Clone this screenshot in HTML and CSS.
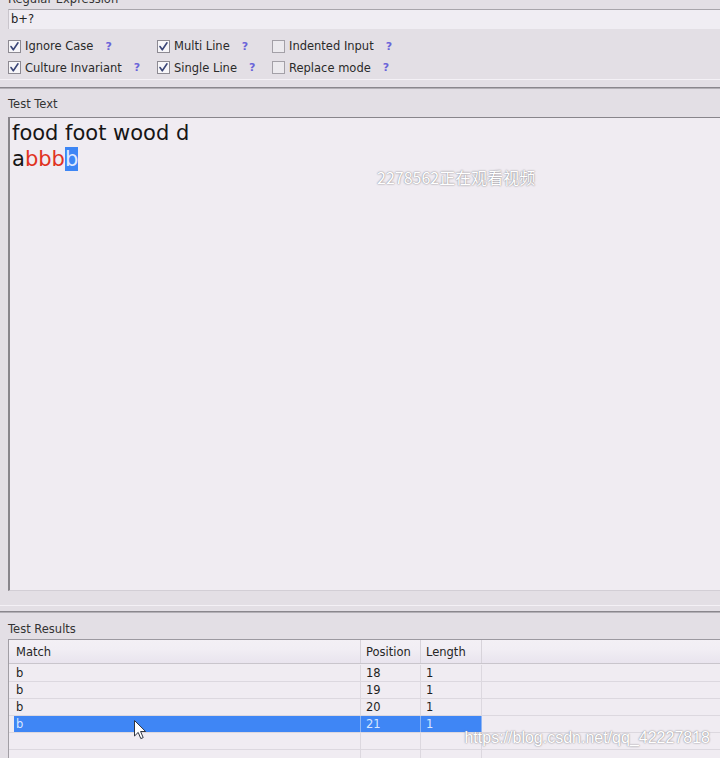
FILE: index.html
```html
<!DOCTYPE html>
<html>
<head>
<meta charset="utf-8">
<link rel="stylesheet" href="styles.css">
</head>
<body>
<div class="app">
  <section class="regex">
    <div class="label label-cut">Regular Expression</div>
    <div class="regex-input">b+?</div>
    <div class="options">
      <div class="opt"><svg class="cb" viewBox="0 0 13 13"><rect class="cb-box" x="0.5" y="0.5" width="12" height="12"/><path class="cb-check" d="M3 6.5 L5.3 9.8 L10 2.8"/></svg><span>Ignore Case</span><span class="help">?</span></div>
      <div class="opt"><svg class="cb" viewBox="0 0 13 13"><rect class="cb-box" x="0.5" y="0.5" width="12" height="12"/><path class="cb-check" d="M3 6.5 L5.3 9.8 L10 2.8"/></svg><span>Multi Line</span><span class="help">?</span></div>
      <div class="opt"><svg class="cb" viewBox="0 0 13 13"><rect class="cb-box off" x="0.5" y="0.5" width="12" height="12"/></svg><span>Indented Input</span><span class="help">?</span></div>
      <div class="opt"><svg class="cb" viewBox="0 0 13 13"><rect class="cb-box" x="0.5" y="0.5" width="12" height="12"/><path class="cb-check" d="M3 6.5 L5.3 9.8 L10 2.8"/></svg><span>Culture Invariant</span><span class="help">?</span></div>
      <div class="opt"><svg class="cb" viewBox="0 0 13 13"><rect class="cb-box" x="0.5" y="0.5" width="12" height="12"/><path class="cb-check" d="M3 6.5 L5.3 9.8 L10 2.8"/></svg><span>Single Line</span><span class="help">?</span></div>
      <div class="opt"><svg class="cb" viewBox="0 0 13 13"><rect class="cb-box off" x="0.5" y="0.5" width="12" height="12"/></svg><span>Replace mode</span><span class="help">?</span></div>
    </div>
  </section>
  <div class="splitter splitter-top"></div>
  <section class="test-text">
    <div class="label">Test Text</div>
    <div class="editor">
      <div class="line">food foot wood d</div>
      <div class="line">a<span class="hit">bbb</span><span class="sel">b</span></div>
      <div class="viewer-mark">2278562正在观看视频</div>
    </div>
  </section>
  <div class="splitter splitter-bottom"></div>
  <section class="results">
    <div class="label">Test Results</div>
    <div class="table">
      <div class="thead">
        <div class="th th-match">Match</div>
        <div class="th">Position</div>
        <div class="th">Length</div>
        <div class="th th-rest"></div>
      </div>
      <div class="tbody">
        <div class="tr"><div class="pad"></div><div class="td td-match">b</div><div class="td">18</div><div class="td">1</div><div class="td td-rest"></div></div>
        <div class="tr"><div class="pad"></div><div class="td td-match">b</div><div class="td">19</div><div class="td">1</div><div class="td td-rest"></div></div>
        <div class="tr"><div class="pad"></div><div class="td td-match">b</div><div class="td">20</div><div class="td">1</div><div class="td td-rest"></div></div>
        <div class="tr tr-selected"><div class="pad"></div><div class="td td-match">b</div><div class="td">21</div><div class="td">1</div><div class="td td-rest"></div></div>
        <div class="tr"><div class="pad"></div><div class="td td-match"></div><div class="td"></div><div class="td"></div><div class="td td-rest"></div></div>
        <div class="tr"><div class="pad"></div><div class="td td-match"></div><div class="td"></div><div class="td"></div><div class="td td-rest"></div></div>
      </div>
    </div>
  </section>
</div>
<svg class="cursor" viewBox="0 0 13 20"><path d="M0.5 0.5 L0.5 16 L4.2 12.4 L6.8 18.6 L9.2 17.6 L6.6 11.5 L11.6 11.5 Z"/></svg>
<div class="csdn-mark">https://blog.csdn.net/qq_42227818</div>
</body>
</html>
```
FILE: styles.css
```css
html, body {
  margin: 0;
  padding: 0;
}
body {
  width: 720px;
  height: 758px;
  overflow: hidden;
  position: relative;
  background: #e3dfe5;
  font-family: "DejaVu Sans", Verdana, sans-serif;
  font-size: 11.5px;
  color: #2a2a2a;
}
.app {
  display: flex;
  flex-direction: column;
}
.label {
  line-height: 14px;
  height: 14px;
  box-sizing: border-box;
  padding: 1px 0 0 8px;
  color: #333;
  white-space: nowrap;
}
.label-cut {
  margin-top: -9px;
}
.regex-input {
  margin: 4px 0 0 8px;
  height: 20px;
  box-sizing: border-box;
  border-top: 1px solid #a8a5ab;
  border-left: 1px solid #c9c5cc;
  background: #f0edf3;
  line-height: 19px;
  padding-left: 2px;
  color: #222;
}
.options {
  display: grid;
  grid-template-columns: 149px 115px 1fr;
  grid-template-rows: 22px 21px;
  padding: 6px 0 0 8px;
}
.opt {
  display: flex;
  align-items: center;
  gap: 4px;
  white-space: nowrap;
}
.cb {
  width: 13px;
  height: 13px;
  flex: none;
}
.cb-box {
  fill: #f7f6f9;
  stroke: #8d8a92;
  stroke-width: 1;
}
.cb-box.off {
  fill: #eceaee;
  stroke: #a3a0a7;
}
.cb-check {
  fill: none;
  stroke: #3b4678;
  stroke-width: 1.6;
  stroke-linecap: round;
  stroke-linejoin: round;
}
.help {
  margin-left: 8px;
  color: #6a64d9;
  font-weight: bold;
  font-size: 11px;
}
.splitter {
  border-top: 1px solid #f4f1f6;
  border-bottom: 1px solid #8a878d;
  box-shadow: 0 1px 0 #b3b0b6;
}
.splitter-top {
  margin-top: 1px;
  height: 7px;
}
.splitter-bottom {
  margin-top: 14px;
  height: 5px;
}
.test-text {
  padding-top: 8px;
}
.test-text .label {
  margin-bottom: 7px;
}
.editor {
  position: relative;
  margin-left: 8px;
  height: 474px;
  box-sizing: border-box;
  border-top: 1px solid #88858b;
  border-left: 2px solid #88858b;
  border-bottom: 1px solid #d2ced5;
  background: #f0ecf2;
  padding: 2px 0 0 2px;
  font-size: 21px;
  line-height: 26px;
  color: #161616;
}
.line {
  white-space: pre;
}
.hit {
  color: #e0321f;
}
.sel {
  background: #3d86f5;
  color: #dfe9ff;
}
.viewer-mark {
  position: absolute;
  left: 367px;
  top: 51px;
  font-family: "Noto Sans CJK SC", "Noto Sans", sans-serif;
  font-size: 16px;
  line-height: 16px;
  color: #ffffff;
  text-shadow: 0 0 2px #8d8a90, 0 0 1px #a09da3;
  white-space: nowrap;
}
.results {
  padding-top: 9px;
}
.results .label {
  margin-bottom: 4px;
}
.table {
  margin-left: 8px;
  border-left: 1px solid #a19ea4;
  border-top: 1px solid #9c99a0;
  background: #f0ecf2;
  height: 200px;
}
.thead {
  display: grid;
  grid-template-columns: 352px 60px 61px 1fr;
  height: 24px;
  box-sizing: border-box;
  border-bottom: 1px solid #c9c5cc;
  background: linear-gradient(#f3f0f5, #f1eef4 40%, #e9e4ee);
}
.th {
  line-height: 22px;
  padding: 1px 0 0 5px;
  border-right: 1px solid #d7d3da;
  color: #262626;
  white-space: nowrap;
}
.th-match {
  padding-left: 7px;
}
.th-rest {
  border-right: none;
}
.tbody {
  padding-top: 1px;
}
.tr {
  display: grid;
  grid-template-columns: 5px 347px 60px 61px 1fr;
  height: 17px;
  box-sizing: border-box;
  border-bottom: 1px solid #dcd8df;
}
.td {
  line-height: 15px;
  padding: 1px 0 0 5px;
  border-right: 1px solid #dcd8df;
  color: #1e1e1e;
  white-space: nowrap;
}
.td-match {
  padding-left: 2px;
}
.td-rest {
  border-right: none;
}
.tr-selected .td {
  background: #3f86f5;
  color: #d9e6ff;
  border-right-color: #8fb5f3;
}
.tr-selected .td-rest {
  background: transparent;
}
.cursor {
  position: absolute;
  left: 134px;
  top: 720px;
  width: 13px;
  height: 20px;
}
.cursor path {
  fill: #ffffff;
  stroke: #2f3440;
  stroke-width: 1;
  stroke-linejoin: round;
}
.csdn-mark {
  position: absolute;
  right: 10px;
  top: 730px;
  font-family: "Liberation Sans", Arial, sans-serif;
  font-size: 16px;
  line-height: 16px;
  color: #ffffff;
  text-shadow: 0 0 2px #8d8a90, 0 0 1px #a09da3;
  white-space: nowrap;
}
```
